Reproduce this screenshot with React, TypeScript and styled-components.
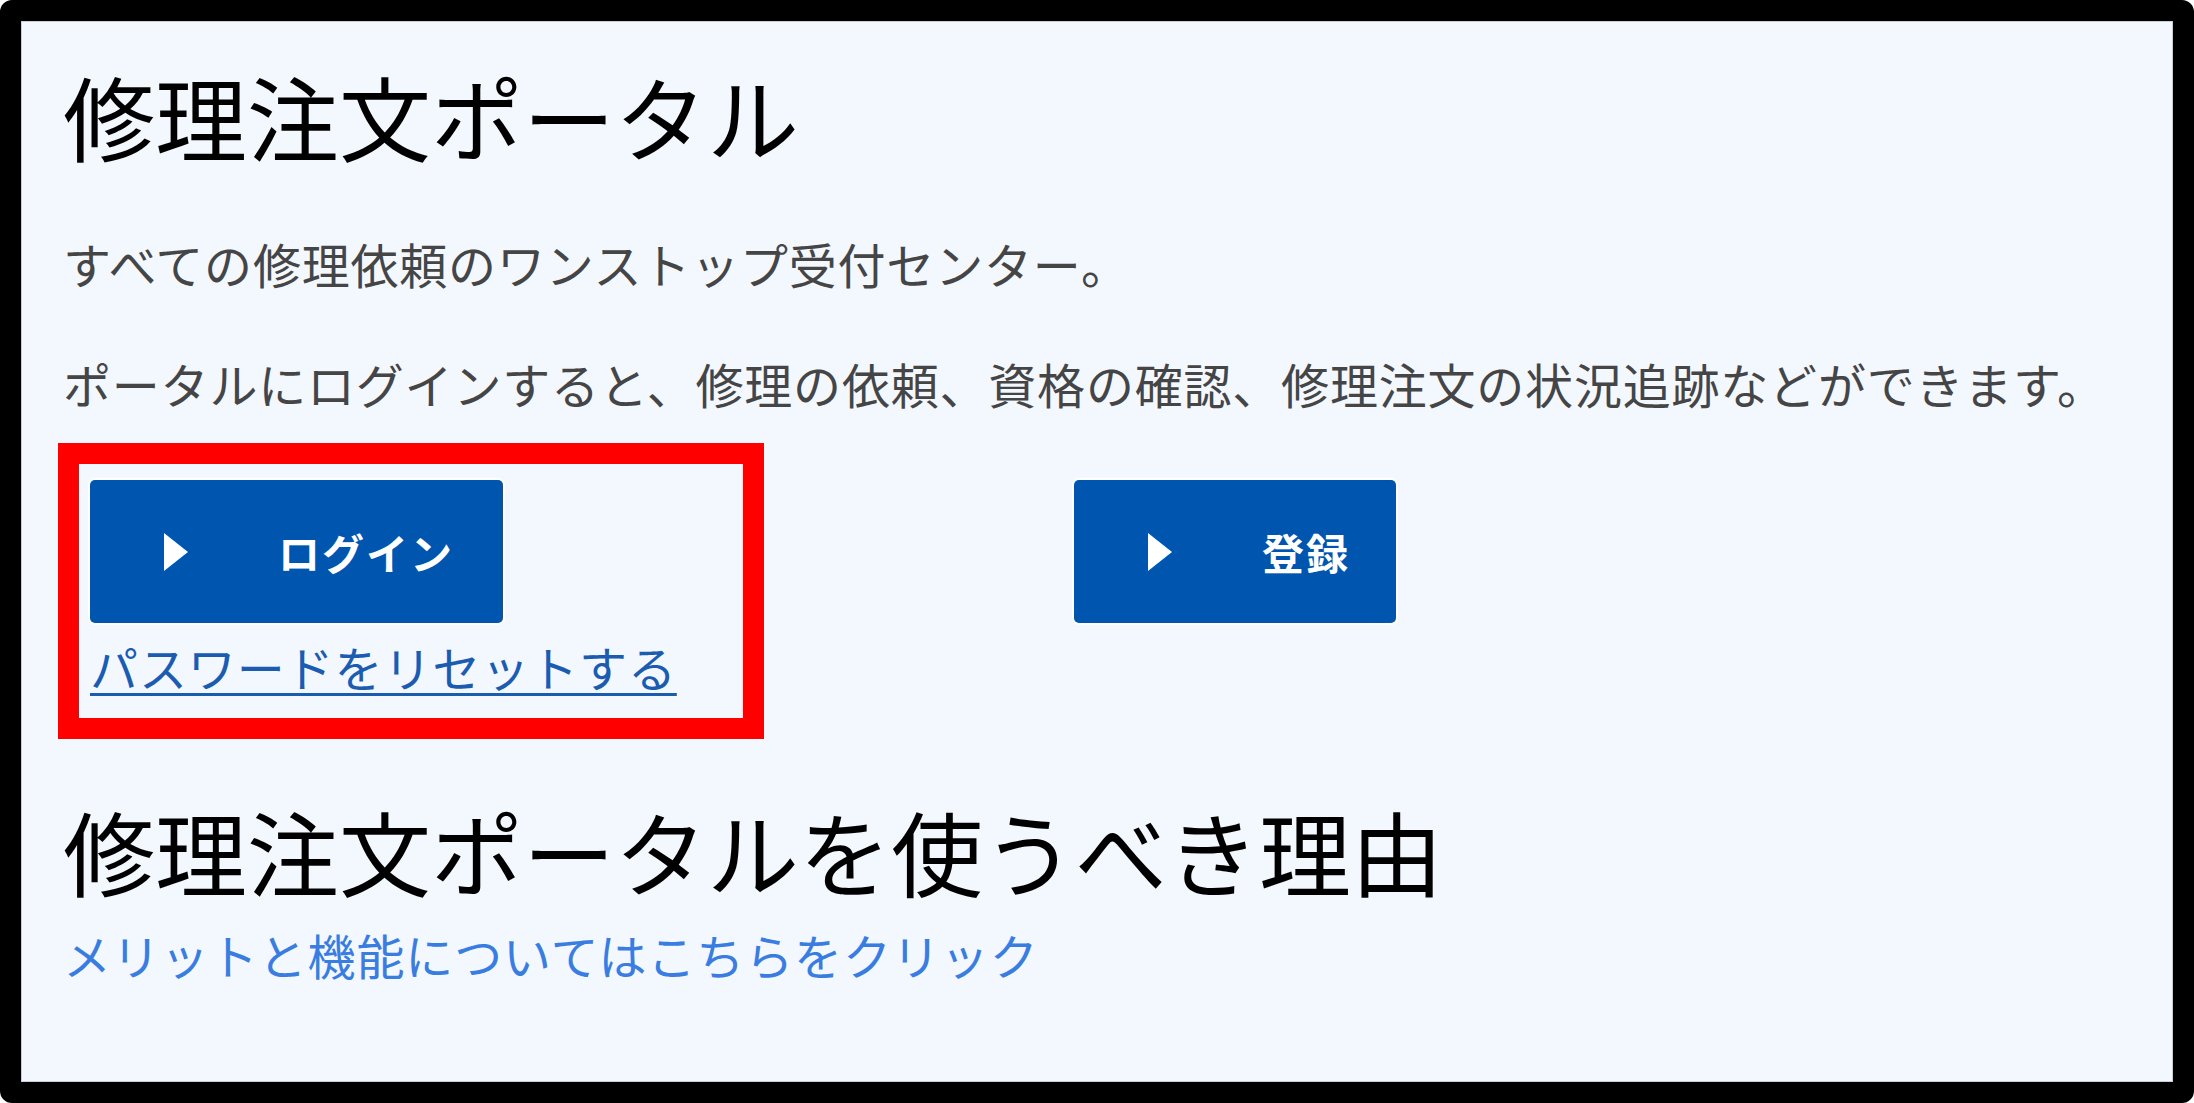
import styled, { createGlobalStyle } from "styled-components"

const GlobalStyle = createGlobalStyle`
  html, body {
    margin: 0;
    padding: 0;
    background: #ffffff;
  }

  body {
    font-family: "Noto Sans CJK JP", "Noto Sans", sans-serif;
  }
`

const Frame = styled.div`
  box-sizing: border-box;
  height: 100vh;
  border: 21px solid #000;
  border-radius: 12px;
  background: #000;
`

const Panel = styled.main`
  box-sizing: border-box;
  height: 100%;
  background: #f3f7fe;
  border: 1px solid #c9cdd4;
  padding: 38px 0 0 41px;
`

const Title = styled.h1`
  margin: 0;
  font-size: 92px;
  font-weight: 400;
  line-height: 110px;
  color: #000;
`

const Lead = styled.p<{ $gap: number }>`
  margin: ${p => p.$gap}px 0 0;
  font-size: 48px;
  line-height: 72px;
  letter-spacing: 0.8px;
  color: #454545;
`

const ActionRow = styled.div`
  display: flex;
  align-items: flex-start;
  margin-top: 24px;
`

const Highlight = styled.div`
  box-sizing: border-box;
  width: 706px;
  margin-left: -5px;
  border: 21px solid #ff0000;
  padding: 16px 0 16px 11px;
`

const ActionButton = styled.button<{ $width: number }>`
  display: flex;
  align-items: center;
  box-sizing: border-box;
  width: ${p => p.$width}px;
  height: 143px;
  padding: 0 0 0 73px;
  border: none;
  border-radius: 5px;
  background: #0055ae;
  box-shadow: 0 0 0 2px #ffffff;
  color: #fff;
  font-family: inherit;
  font-size: 42px;
  font-weight: 700;
  letter-spacing: 2px;
  cursor: pointer;
`

const RegisterButton = styled(ActionButton)`
  margin: 37px 0 0 310px;
`

const Label = styled.span`
  margin-left: 89px;
  line-height: 1;
`

const ResetLink = styled.a`
  display: inline-block;
  margin-top: 7px;
  font-size: 48px;
  line-height: 72px;
  letter-spacing: 0.9px;
  color: #1b5cb0;
  text-decoration: underline;
  text-decoration-thickness: 3px;
  text-underline-offset: 6px;
`

const SubTitle = styled.h2`
  margin: 56px 0 0;
  font-size: 92px;
  font-weight: 400;
  line-height: 110px;
  color: #000;
`

const MoreLink = styled.a`
  display: block;
  margin-top: 13px;
  font-size: 48px;
  line-height: 72px;
  letter-spacing: 0.9px;
  color: #3a7de0;
  text-decoration: none;
`

function Play() {
  return (
    <svg width="26" height="40" viewBox="0 0 26 40">
      <polygon points="1,1 25,20 1,39" fill="#fff" />
    </svg>
  )
}

export default function App() {
  return (
    <>
      <GlobalStyle />
      <Frame>
        <Panel>
          <Title>修理注文ポータル</Title>
          <Lead $gap={57}>すべての修理依頼のワンストップ受付センター。</Lead>
          <Lead $gap={48}>
            ポータルにログインすると、修理の依頼、資格の確認、修理注文の状況追跡などができます。
          </Lead>

          <ActionRow>
            <Highlight>
              <ActionButton $width={413}>
                <Play />
                <Label>ログイン</Label>
              </ActionButton>
              <ResetLink href="#">パスワードをリセットする</ResetLink>
            </Highlight>

            <RegisterButton $width={322}>
              <Play />
              <Label>登録</Label>
            </RegisterButton>
          </ActionRow>

          <SubTitle>修理注文ポータルを使うべき理由</SubTitle>
          <MoreLink href="#">メリットと機能についてはこちらをクリック</MoreLink>
        </Panel>
      </Frame>
    </>
  )
}
